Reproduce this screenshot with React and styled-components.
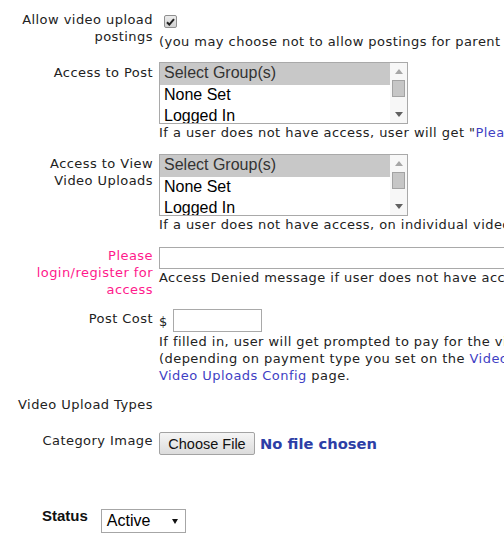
import React from "react";
import styled, { createGlobalStyle } from "styled-components";

const GlobalStyle = createGlobalStyle`
  html, body {
    margin: 0;
    padding: 0;
    background: #fff;
    overflow: hidden;
  }
  body {
    font-family: "DejaVu Sans", Verdana, sans-serif;
    font-size: 13px;
    letter-spacing: 0.45px;
    color: #222;
  }
`;

const groups = ["Select Group(s)", "None Set", "Logged In"];

const ListBox = ({ items }) => (
  <Box>
    <Options>
      {items.map((item, i) => (
        <Option key={item} $selected={i === 0}>
          {item}
        </Option>
      ))}
    </Options>
    <Scrollbar>
      <ArrowBtn>
        <svg width="8" height="5" viewBox="0 0 8 5">
          <path d="M0 5 L4 0 L8 5 Z" fill="#a6a6a6" />
        </svg>
      </ArrowBtn>
      <Track>
        <Thumb />
      </Track>
      <ArrowBtn>
        <svg width="8" height="5" viewBox="0 0 8 5">
          <path d="M0 0 L8 0 L4 5 Z" fill="#606060" />
        </svg>
      </ArrowBtn>
    </Scrollbar>
  </Box>
);

const App = () => {
  return (
    <Page>
      <GlobalStyle />
      <Form>
        <Row>
          <Label>
            Allow video upload
            <br />
            postings
          </Label>
          <Field>
            <CheckBox>
              <svg width="9" height="8" viewBox="0 0 9 8">
                <path
                  d="M1 4.2 L3.3 6.6 L8 1.2"
                  stroke="#222"
                  strokeWidth="2"
                  fill="none"
                />
              </svg>
            </CheckBox>
            <Help $top={5}>
              (you may choose not to allow postings for parent forum categories)
            </Help>
          </Field>
        </Row>

        <Row>
          <Label $pad={2}>Access to Post</Label>
          <Field>
            <ListBox items={groups} />
            <Help>
              If a user does not have access, user will get "
              <Link>Please login/register for access</Link>" message
            </Help>
          </Field>
        </Row>

        <Row $top={13}>
          <Label $pad={1}>
            Access to View
            <br />
            Video Uploads
          </Label>
          <Field>
            <ListBox items={groups} />
            <Help>
              If a user does not have access, on individual video pages they
              will see
            </Help>
          </Field>
        </Row>

        <Row $top={14}>
          <Label $pink>
            Please
            <br />
            login/register for
            <br />
            access
          </Label>
          <Field>
            <TextInput $width={420} />
            <Help>Access Denied message if user does not have access</Help>
          </Field>
        </Row>

        <Row $top={11}>
          <Label $pad={1}>Post Cost</Label>
          <Field>
            <CostLine>
              <Dollar>$</Dollar>
              <TextInput $width={89} $height={23} />
            </CostLine>
            <Help $top={1}>
              If filled in, user will get prompted to pay for the video upload
              <br />
              (depending on payment type you set on the{" "}
              <Link>Video Uploads Config</Link>
              <br />
              <Link>Video Uploads Config</Link> page.
            </Help>
          </Field>
        </Row>

        <Row>
          <Label>Video Upload Types</Label>
          <Field />
        </Row>

        <Row $top={19}>
          <Label>Category Image</Label>
          <Field>
            <FileLine>
              <FileButton>Choose File</FileButton>
              <NoFile>No file chosen</NoFile>
            </FileLine>
          </Field>
        </Row>

        <StatusRow>
          <StatusLabel>Status</StatusLabel>
          <DropDown>
            <span>Active</span>
            <svg width="6" height="5" viewBox="0 0 6 5">
              <path d="M0 0 L6 0 L3 5 Z" fill="#111" />
            </svg>
          </DropDown>
        </StatusRow>
      </Form>
    </Page>
  );
};

export default App;

const Page = styled.div`
  width: 900px;
  height: 554px;
`;

const Form = styled.div`
  display: flex;
  flex-direction: column;
  padding-top: 11px;
`;

const Row = styled.div`
  display: grid;
  grid-template-columns: 138px 1fr;
  column-gap: 6px;
  padding-left: 15px;
  margin-top: ${(p) => (p.$top ?? 12)}px;
  &:first-child {
    margin-top: 0;
  }
`;

const Label = styled.div`
  text-align: right;
  white-space: nowrap;
  line-height: 17px;
  padding-top: ${(p) => p.$pad || 0}px;
  color: ${(p) => (p.$pink ? "#ff1a8c" : "#222")};
`;

const Field = styled.div`
  display: flex;
  flex-direction: column;
  align-items: flex-start;
  white-space: nowrap;
`;

const Help = styled.div`
  line-height: 17px;
  margin-top: ${(p) => p.$top || 0}px;
  color: #222;
`;

const Link = styled.span`
  color: #3f3fc4;
`;

const CheckBox = styled.span`
  display: flex;
  align-items: center;
  justify-content: center;
  width: 11px;
  height: 11px;
  margin: 4px 0 0 5px;
  border: 1px solid #8f8f8f;
  border-radius: 2px;
  background: linear-gradient(#ececec, #d2d2d2);
`;

const Box = styled.div`
  display: flex;
  width: 247px;
  height: 60px;
  border: 1px solid #a9a9a9;
  background: #fff;
  overflow: hidden;
`;

const Options = styled.div`
  flex: 1;
  display: flex;
  flex-direction: column;
  font-family: "Liberation Sans", Arial, sans-serif;
  font-size: 16px;
  letter-spacing: 0;
`;

const Option = styled.div`
  flex: none;
  height: 21.5px;
  line-height: 19px;
  padding-left: 4px;
  background: ${(p) => (p.$selected ? "#c8c8c8" : "transparent")};
  color: ${(p) => (p.$selected ? "#333" : "#000")};
`;

const Scrollbar = styled.div`
  width: 17px;
  display: flex;
  flex-direction: column;
  background: #f7f7f7;
`;

const ArrowBtn = styled.div`
  height: 17px;
  display: flex;
  align-items: center;
  justify-content: center;
`;

const Track = styled.div`
  flex: 1;
  padding: 0 2px;
`;

const Thumb = styled.div`
  height: 15px;
  border: 1px solid #a3a3a3;
  background: #c6c6c6;
`;

const TextInput = styled.div`
  width: ${(p) => p.$width}px;
  height: ${(p) => p.$height || 22}px;
  box-sizing: border-box;
  border: 1px solid #a9a9a9;
  background: #fff;
`;

const CostLine = styled.div`
  display: flex;
  align-items: flex-start;
`;

const Dollar = styled.span`
  line-height: 17px;
  margin-top: 4px;
  margin-right: 5px;
`;

const FileLine = styled.div`
  display: flex;
  align-items: center;
  gap: 5px;
`;

const FileButton = styled.div`
  width: 96px;
  height: 23px;
  box-sizing: border-box;
  display: flex;
  align-items: center;
  justify-content: center;
  border: 1px solid #a3a3a3;
  border-radius: 2px;
  background: linear-gradient(#f5f5f5, #dcdcdc);
  font-family: "Liberation Sans", Arial, sans-serif;
  font-size: 14.5px;
  letter-spacing: 0;
  color: #111;
`;

const NoFile = styled.span`
  font-weight: bold;
  font-size: 14.7px;
  letter-spacing: 0;
  color: #2c3ea6;
`;

const StatusRow = styled.div`
  display: flex;
  align-items: flex-start;
  gap: 13px;
  margin-top: 52px;
  padding-left: 42px;
`;

const StatusLabel = styled.span`
  font-family: "Liberation Sans", Arial, sans-serif;
  font-weight: bold;
  font-size: 15px;
  line-height: 17px;
  letter-spacing: 0;
  color: #111;
`;

const DropDown = styled.div`
  margin-top: 2px;
  width: 85px;
  height: 24px;
  box-sizing: border-box;
  display: flex;
  align-items: center;
  justify-content: space-between;
  padding: 0 7px 0 5px;
  border: 1px solid #a6a6a6;
  background: #fff;
  font-family: "Liberation Sans", Arial, sans-serif;
  font-size: 16px;
  letter-spacing: 0;
  color: #000;
`;
